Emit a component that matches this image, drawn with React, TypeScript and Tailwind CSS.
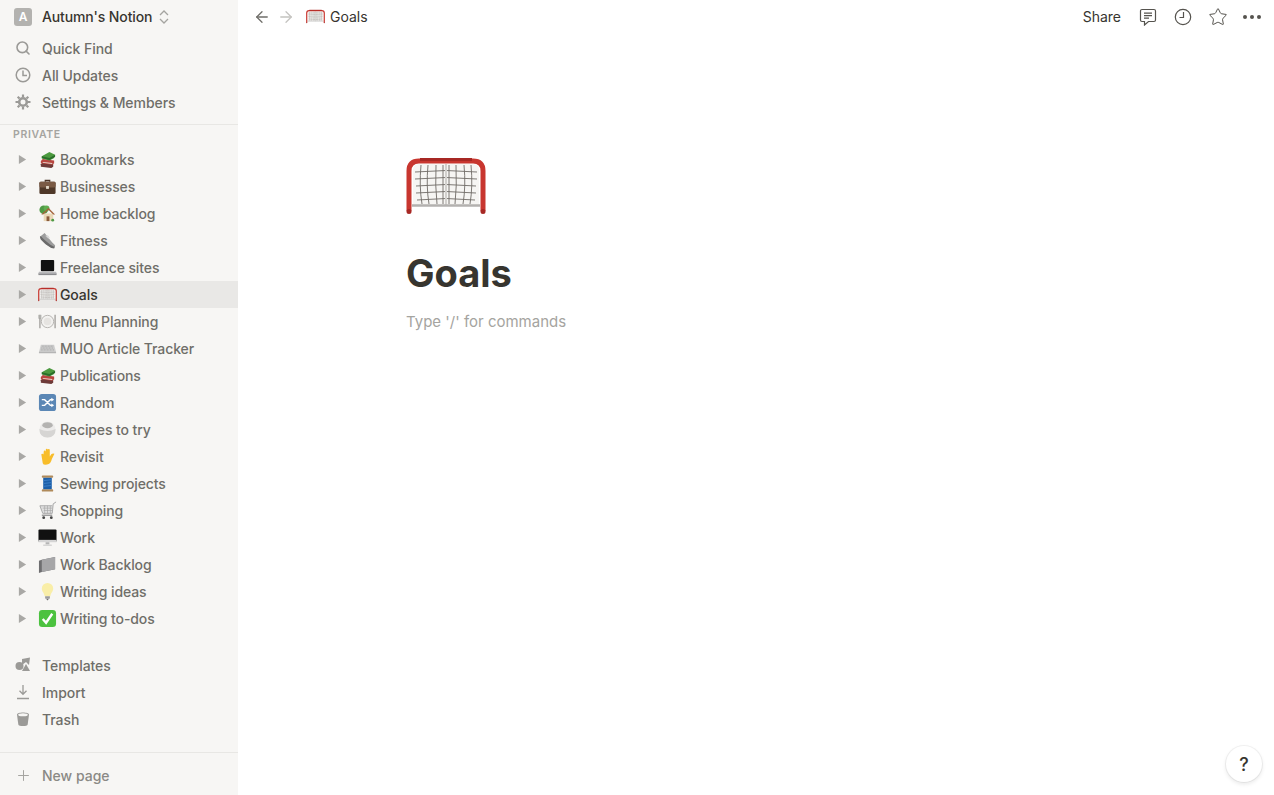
import { ArrowLeft, ArrowRight, Plus, Search, Star } from 'lucide-react';
import type { ReactNode } from 'react';

const Emoji = ({ children }: { children: ReactNode }) => (
    <svg viewBox="0 0 20 20" className="w-[19px] h-[19px] shrink-0">
        {children}
    </svg>
);

const Books = () => (
    <Emoji>
        <path d="M3 15l2-2 11 1.500v3l-2 1.500-11-1.500z" fill="#6d3a38" />
        <path d="M3 11.500l2-2 12 1.500v3l-2 1.500-12-1.500z" fill="#b8453f" />
        <path d="M5 12.500l10 1.300v1L5 13.500z" fill="#e8dfd5" />
        <path d="M4 6.500l8-4.500 6 3-1 3.500-5 2.500-8-2z" fill="#4c9a3f" />
        <path d="M4 6.500l8 2 6-3.500v2l-6 3.500-8-2z" fill="#2a6e2a" />
    </Emoji>
);

const Briefcase = () => (
    <Emoji>
        <path d="M7 5V3h6v2h-1.500V4.500h-3V5z" fill="#4a3427" />
        <rect x="1.500" y="5" width="17" height="13" rx="1.500" fill="#4f3829" />
        <rect x="1.500" y="5" width="17" height="6" rx="1.500" fill="#7a5a45" />
        <rect x="8.500" y="9.500" width="3" height="3" fill="#e3d9c8" />
    </Emoji>
);

const House = () => (
    <Emoji>
        <circle cx="6" cy="6" r="4.500" fill="#4f9a45" />
        <circle cx="9" cy="4.500" r="3" fill="#5fae50" />
        <rect x="6" y="10" width="10" height="8" fill="#ead8b8" />
        <path d="M3.500 11L11 4l7 7h-2l-5-5-5.500 5z" fill="#a5643c" />
        <rect x="9" y="13" width="3" height="5" fill="#8a5a3a" />
        <circle cx="15.500" cy="17" r="1.500" fill="#4f9a45" />
    </Emoji>
);

const Shoe = () => (
    <Emoji>
        <path d="M2 6l5-4 3 4 5 6 3 3-1 3-4-1-6-4-4-4z" fill="#9c9c9c" />
        <path d="M2 6l1 3 5 5 6 4 3 .5 1-3-1 1-4-2-6-5-4-4z" fill="#6a6a6a" />
        <path d="M8 5l3 3M10 4.500l2 3" stroke="#d2d2d2" strokeWidth="1" />
    </Emoji>
);

const Laptop = () => (
    <Emoji>
        <rect x="3" y="2" width="14" height="12" rx="1" fill="#111" />
        <path d="M1 14.500h18l1 2.500H0z" fill="#b9b9bb" />
        <rect x="0.500" y="16.500" width="19" height="1.500" fill="#8d8d90" />
    </Emoji>
);

const Net = () => (
    <svg viewBox="0 0 80 56" className="w-full h-full">
        <path d="M7 47V12Q7 6 13 6H67Q73 6 73 12V47" fill="#f6f5f3" />
        <g stroke="#6f6b67" strokeWidth=".9" fill="none">
            <path d="M9 14Q40 11 71 14M9 21Q40 18 71 21M10 28Q40 25 70 28M10 35Q40 32 70 35M11 42Q40 39 69 42" />
            <path d="M15 7Q13 28 16 46M22 7Q20 28 23 46M30 7Q29 28 31 46M37 7V46M43 7V46M50 7Q51 28 49 46M58 7Q60 28 57 46M65 7Q67 28 64 46" />
        </g>
        <path d="M40 6V48" stroke="#d2d0cd" strokeWidth="2" />
        <path d="M6 47.500H74" stroke="#b3b1af" strokeWidth="2.500" />
        <path d="M3 53V13Q3 3 13 3H67Q77 3 77 13V53" fill="none" stroke="#c8362f" strokeWidth="5" />
        <path d="M14 1.500H66" stroke="#a72824" strokeWidth="3" />
        <circle cx="3" cy="53.500" r="2.500" fill="#a72824" />
        <circle cx="77" cy="53.500" r="2.500" fill="#a72824" />
    </svg>
);

const Goal = () => (
    <span className="w-[19px] h-[19px] shrink-0 flex items-center">
        <Net />
    </span>
);

const Plate = () => (
    <Emoji>
        <circle cx="10" cy="10" r="6.500" fill="#f3f2f0" stroke="#b5b3b0" />
        <circle cx="10" cy="10" r="4" fill="#e6e4e1" />
        <path d="M2 3v14M18 3v14" stroke="#a7a5a2" strokeWidth="1.500" />
        <path d="M1 3v4h2V3" fill="none" stroke="#a7a5a2" />
    </Emoji>
);

const Keyboard = () => (
    <Emoji>
        <path d="M3 6h14l2 8H1z" fill="#cfcfcf" />
        <path d="M4 7.500h12M3.500 9.500h13M3 11.500h14" stroke="#a3a3a3" strokeDasharray="1 .6" />
        <rect x="1" y="13.500" width="18" height="1.500" fill="#b5b5b5" />
    </Emoji>
);

const Shuffle = () => (
    <Emoji>
        <rect x="1" y="1" width="18" height="18" rx="3" fill="#5b87b5" />
        <path d="M4 7h3l6 6h2M4 13h3l6-6h2" fill="none" stroke="#fff" strokeWidth="1.500" />
        <path d="M14 5l3 2-3 2zM14 11l3 2-3 2z" fill="#fff" />
    </Emoji>
);

const Bowl = () => (
    <Emoji>
        <circle cx="10" cy="10" r="8.500" fill="#ecebea" />
        <path d="M1.500 9.500q8.500 4 17 0 0 9-8.500 9t-8.500-9z" fill="#d6d5d3" />
        <ellipse cx="10" cy="5.500" rx="5.500" ry="3.200" fill="#b4b3b1" />
    </Emoji>
);

const Hand = () => (
    <Emoji>
        <path d="M5 17L3.500 8q0-1 1-1t1.300 1L6 5q0-1.200 1-1.200T8.200 5V2.800q0-1 1-1t1.100 1V3q0-1 1-1t1.100 1v7l1.600-2.300q1.500-1.500 3.300-.7L14.500 13q-1 5-5 5.500T5 17z" fill="#f8bd2a" />
    </Emoji>
);

const Spool = () => (
    <Emoji>
        <rect x="4" y="1.500" width="12" height="2.500" rx="1" fill="#b08a5a" />
        <rect x="4" y="16" width="12" height="2.500" rx="1" fill="#b08a5a" />
        <rect x="5.500" y="4" width="9" height="12" fill="#1d5fa8" />
        <path d="M5.500 7l9-1M5.500 10l9-1M5.500 13l9-1" stroke="#3d80c8" />
    </Emoji>
);

const Cart = () => (
    <Emoji>
        <path d="M19 1l-3 2-1 10H5L2 5h13" fill="#e0e0e0" stroke="#a8a8a8" />
        <path d="M5 7.500h10M6 10h9M7 5v8M10 5v8M13 5v8" stroke="#a8a8a8" strokeWidth=".7" />
        <path d="M4 15h11" stroke="#9b9b9b" strokeWidth="1.500" />
        <circle cx="6" cy="17.500" r="1.500" fill="#444" />
        <circle cx="14" cy="17.500" r="1.500" fill="#444" />
    </Emoji>
);

const Monitor = () => (
    <Emoji>
        <rect x="0.500" y="1.500" width="19" height="13" rx="1" fill="#111" />
        <rect x="0.500" y="12.500" width="19" height="2.500" fill="#d5d5d5" />
        <path d="M8 15h4v2H8zM5.500 17.500h9v1h-9z" fill="#b5b5b5" />
    </Emoji>
);

const Folder = () => (
    <Emoji>
        <path d="M1 6l3-1 14-3v13l-14 3-3 1z" fill="#6e6e70" />
        <path d="M4 5l14-3v13L4 18z" fill="#a6a6a8" />
    </Emoji>
);

const Bulb = () => (
    <Emoji>
        <path d="M10 1a6 6 0 0 0-6 6c0 3 2.500 4 3 8h6c.5-4 3-5 3-8a6 6 0 0 0-6-6z" fill="#f9eea8" />
        <rect x="7.500" y="15" width="5" height="2.500" fill="#9d9d9d" />
        <path d="M8.500 17.500h3L10 19.500z" fill="#6f6f6f" />
    </Emoji>
);

const Check = () => (
    <Emoji>
        <rect x="1" y="1" width="18" height="18" rx="3.500" fill="#4cc23f" />
        <path d="M5 10.500l3.500 4L15 5" fill="none" stroke="#fff" strokeWidth="2.500" />
    </Emoji>
);

const pages = [
    { name: 'Bookmarks', icon: Books },
    { name: 'Businesses', icon: Briefcase },
    { name: 'Home backlog', icon: House },
    { name: 'Fitness', icon: Shoe },
    { name: 'Freelance sites', icon: Laptop },
    { name: 'Goals', icon: Goal, active: true },
    { name: 'Menu Planning', icon: Plate },
    { name: 'MUO Article Tracker', icon: Keyboard },
    { name: 'Publications', icon: Books },
    { name: 'Random', icon: Shuffle },
    { name: 'Recipes to try', icon: Bowl },
    { name: 'Revisit', icon: Hand },
    { name: 'Sewing projects', icon: Spool },
    { name: 'Shopping', icon: Cart },
    { name: 'Work', icon: Monitor },
    { name: 'Work Backlog', icon: Folder },
    { name: 'Writing ideas', icon: Bulb },
    { name: 'Writing to-dos', icon: Check },
];

const ClockIcon = () => (
    <svg viewBox="0 0 16 16" className="w-4 h-4" fill="none" stroke="#9b9a97" strokeWidth="1.500">
        <circle cx="8" cy="8" r="6.800" />
        <path d="M8 3.500V8.500H12" />
    </svg>
);

const GearIcon = () => (
    <svg viewBox="0 0 16 16" className="w-4 h-4" fill="none" stroke="#9b9a97">
        <circle cx="8" cy="8" r="3.800" strokeWidth="2.600" />
        <path d="M8 .5v2.500M8 13v2.500M.5 8H3M13 8h2.500M2.700 2.700l1.800 1.800M11.500 11.500l1.800 1.800M2.700 13.300l1.800-1.800M11.500 4.500l1.800-1.800" strokeWidth="2.200" />
    </svg>
);

const TemplatesIcon = () => (
    <svg viewBox="0 0 16 16" className="w-4 h-4" fill="#9b9a97">
        <circle cx="4.500" cy="9" r="4" />
        <path d="M7 2l8-1.500L14 8 11 5 7 8z" />
        <path d="M11 7l4 7H7z" />
    </svg>
);

const ImportIcon = () => (
    <svg viewBox="0 0 16 16" className="w-4 h-4" fill="none" stroke="#9b9a97" strokeWidth="1.300">
        <path d="M8 1v9M4.500 6.800L8 10.300l3.500-3.500M2 14.500h12" />
    </svg>
);

const TrashIcon = () => (
    <svg viewBox="0 0 16 16" className="w-4 h-4" fill="#9b9a97">
        <path d="M2 3.500C2 .8 14 .8 14 3.500l-1.300 10c-.3 2-9.100 2-9.400 0z" />
        <ellipse cx="8" cy="3.800" rx="4.800" ry="1.500" fill="#f7f6f4" />
    </svg>
);

const NavRow = ({ icon, label }: { icon: ReactNode; label: string }) => (
    <div className="h-[27px] flex items-center pl-[15px]">
        <span className="w-4 h-4 flex items-center justify-center text-[#9b9a97]">{icon}</span>
        <span className="ml-[11px] text-[14px] font-medium tracking-[-0.05px] text-[#6f6e69]">{label}</span>
    </div>
);

const App = () => {
    return (
        <div className="flex h-[795px] w-[1274px] overflow-hidden bg-white font-['Inter',sans-serif]">
            {/* Sidebar */}
            <aside className="w-[238px] shrink-0 bg-[#f7f6f4] flex flex-col">
                <div className="h-[33px] flex items-center pl-[14px]">
                    <span className="w-[18px] h-[18px] rounded-[3px] bg-[#b3b2af] text-white text-[12px] font-semibold flex items-center justify-center">A</span>
                    <span className="ml-[10px] text-[14px] font-medium tracking-[-0.12px] text-[#37352f]">Autumn's Notion</span>
                    <svg viewBox="0 0 10 14" className="w-[10px] h-[14px] ml-[7px]" fill="none" stroke="#a5a4a0" strokeWidth="1.300">
                        <path d="M1 5l4-4 4 4M1 9l4 4 4-4" />
                    </svg>
                </div>
                <div className="mt-[1.500px] pb-[8px] border-b border-[#e8e7e4]">
                    <NavRow icon={<Search className="w-[16px] h-[16px]" strokeWidth={2.4} />} label="Quick Find" />
                    <NavRow icon={<ClockIcon />} label="All Updates" />
                    <NavRow icon={<GearIcon />} label="Settings & Members" />
                </div>
                <div className="h-[21px] pl-[13px] flex items-center text-[10.5px] font-semibold tracking-[0.06em] text-[#a5a4a0]">PRIVATE</div>
                <div className="flex flex-col">
                    {pages.map((page, index) => {
                        const Icon = page.icon;
                        return (
                            <div key={index} className={`h-[27px] flex items-center pl-[18px] ${page.active ? 'bg-[#e9e8e6]' : ''}`}>
                                <svg viewBox="0 0 10 10" className="w-[9px] h-[9px] shrink-0" fill="#a9a8a5">
                                    <path d="M1 0l8 5-8 5z" />
                                </svg>
                                <span className="ml-[10.500px] flex">
                                    <Icon />
                                </span>
                                <span className={`ml-[3.500px] text-[14px] font-medium tracking-[-0.1px] ${page.active ? 'text-[#37352f]' : 'text-[#6f6e69]'}`}>{page.name}</span>
                            </div>
                        );
                    })}
                </div>
                <div className="mt-[20px]">
                    <NavRow icon={<TemplatesIcon />} label="Templates" />
                    <NavRow icon={<ImportIcon />} label="Import" />
                    <NavRow icon={<TrashIcon />} label="Trash" />
                </div>
                <div className="mt-auto h-[43px] pt-[2px] border-t border-[#e8e7e4] flex items-center pl-[15px]">
                    <Plus className="w-[17px] h-[17px] text-[#a5a4a0]" strokeWidth={1.4} />
                    <span className="ml-[10px] text-[14px] font-medium text-[#8a8985]">New page</span>
                </div>
            </aside>

            {/* Main */}
            <main className="flex-1 min-w-0 flex flex-col relative">
                <header className="h-[33px] flex items-center justify-between pl-[15px] pr-[13px]">
                    <div className="flex items-center">
                        <ArrowLeft className="w-[18px] h-[18px] text-[#6f6e69]" strokeWidth={1.7} />
                        <ArrowRight className="w-[18px] h-[18px] ml-[6px] text-[#c4c3c0]" strokeWidth={1.7} />
                        <span className="w-[19px] h-[19px] ml-[11px] flex items-center">
                            <Net />
                        </span>
                        <span className="ml-[5px] text-[14px] text-[#37352f]">Goals</span>
                    </div>
                    <div className="flex items-center text-[#55534e]">
                        <span className="text-[14px] text-[#37352f]">Share</span>
                        <svg viewBox="0 0 18 18" className="w-[18px] h-[18px] ml-[18px]" fill="none" stroke="currentColor" strokeWidth="1.200">
                            <path d="M3 1.500h12a1.500 1.500 0 0 1 1.500 1.500v9a1.500 1.500 0 0 1-1.500 1.500H9.500L5.500 17v-3.500H3A1.500 1.500 0 0 1 1.500 12V3A1.500 1.500 0 0 1 3 1.500z" />
                            <path d="M5 5.200h8M5 7.700h8M5 10.200h5" />
                        </svg>
                        <svg viewBox="0 0 18 18" className="w-[18px] h-[18px] ml-[17px]" fill="none" stroke="currentColor" strokeWidth="1.200">
                            <circle cx="9" cy="9" r="7.700" />
                            <path d="M9.500 4v5.500H5.500" />
                        </svg>
                        <Star className="w-[20px] h-[20px] ml-[16px]" strokeWidth={1.2} />
                        <span className="ml-[15px] flex gap-[3px]">
                            <span className="w-[4px] h-[4px] rounded-full bg-[#55534e]" />
                            <span className="w-[4px] h-[4px] rounded-full bg-[#55534e]" />
                            <span className="w-[4px] h-[4px] rounded-full bg-[#55534e]" />
                        </span>
                    </div>
                </header>

                <div className="pl-[168px] pt-[125px]">
                    <div className="w-[80px] h-[56px]">
                        <Net />
                    </div>
                    <h1 className="mt-[35px] text-[38px] leading-[48px] font-bold text-[#37352f]">Goals</h1>
                    <p className="mt-[13px] text-[15px] leading-[24px] text-[#a5a4a0]">Type '/' for commands</p>
                </div>

                <button className="absolute right-[12px] bottom-[13px] w-[36px] h-[36px] rounded-full bg-white shadow-[0_0_0_1px_rgba(15,15,15,0.05),0_2px_4px_rgba(15,15,15,0.1)] text-[18px] font-medium text-[#37352f] flex items-center justify-center">?</button>
            </main>
        </div>
    );
};

export default App;
